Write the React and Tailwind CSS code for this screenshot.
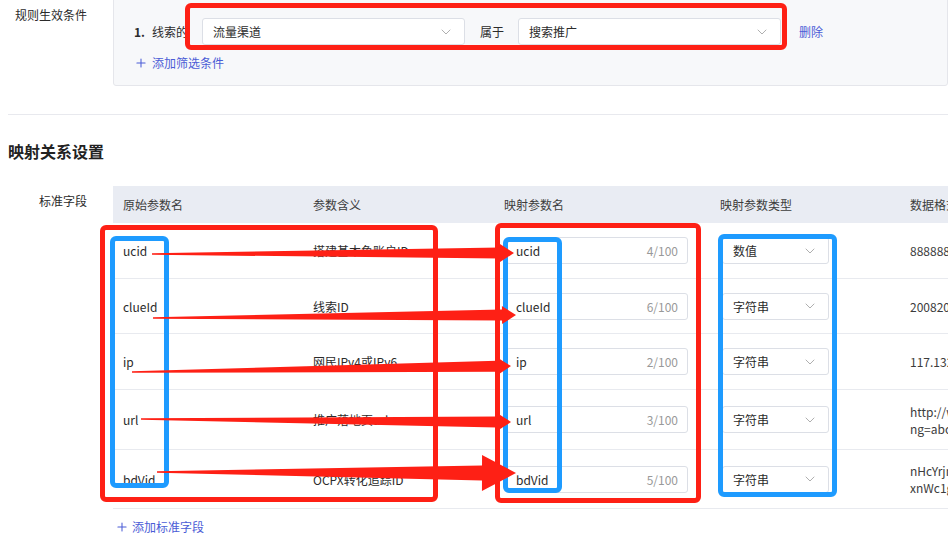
import React from "react";
import { ChevronDown, Plus } from "lucide-react";

const rows = [
  { name: "ucid", meaning: "搭建基木鱼账户ID", count: "4/100", type: "数值", data: ["8888888888"], h: "h-[56px]" },
  { name: "clueId", meaning: "线索ID", count: "6/100", type: "字符串", data: ["2008200000"], h: "h-[55px]" },
  { name: "ip", meaning: "网民IPv4或IPv6", count: "2/100", type: "字符串", data: ["117.132.1.1"], h: "h-[56px]" },
  { name: "url", meaning: "推广落地页url", count: "3/100", type: "字符串", data: ["http://www.baidu.com", "ng=abc123"], h: "h-[60px]" },
  { name: "bdVid", meaning: "OCPX转化追踪ID", count: "5/100", type: "字符串", data: ["nHcYrjnd8b", "xnWc1gRk"], h: "h-[59px]" },
];

const arrows = [
  { from: [152, 254], to: [514, 253], w0: 1.5, w1: 11, hw: 9, hl: 14 },
  { from: [153, 318], to: [516, 315], w0: 1.5, w1: 11, hw: 9, hl: 14 },
  { from: [132, 372], to: [511, 366], w0: 1.5, w1: 11, hw: 9, hl: 14 },
  { from: [141, 419], to: [511, 422], w0: 1.5, w1: 11, hw: 9, hl: 14 },
  { from: [157, 472], to: [516, 473], w0: 1.5, w1: 15, hw: 18, hl: 34 },
];

const arrowPoints = ({ from, to, w0, w1, hw, hl }) => {
  const [x0, y0] = from;
  const [x1, y1] = to;
  const len = Math.hypot(x1 - x0, y1 - y0);
  const dx = (x1 - x0) / len;
  const dy = (y1 - y0) / len;
  const nx = -dy;
  const ny = dx;
  const bx = x1 - dx * hl;
  const by = y1 - dy * hl;
  const p = [
    [x0 + (nx * w0) / 2, y0 + (ny * w0) / 2],
    [bx + (nx * w1) / 2, by + (ny * w1) / 2],
    [bx + nx * hw, by + ny * hw],
    [x1, y1],
    [bx - nx * hw, by - ny * hw],
    [bx - (nx * w1) / 2, by - (ny * w1) / 2],
    [x0 - (nx * w0) / 2, y0 - (ny * w0) / 2],
  ];
  return p.map((q) => q.join(",")).join(" ");
};

const Select = ({ value, className }) => (
  <div
    className={`flex items-center justify-between h-[27px] bg-white border border-[#dcdfe6] rounded-[3px] pl-[10px] pr-[10px] text-[#2b2b2b] ${className}`}
  >
    <span>{value}</span>
    <ChevronDown size={16} strokeWidth={1.2} className="text-[#9a9a9a]" />
  </div>
);

const App = () => {
  return (
    <div className="relative w-[948px] h-[545px] overflow-hidden bg-white text-[12px] leading-[17px] text-[#2b2b2b] font-['Noto_Sans_CJK_SC','Noto_Sans',sans-serif]">
      {/* 规则生效条件 */}
      <div className="flex">
        <div className="w-[113px] shrink-0 text-right pr-[26px] pt-[6px]">规则生效条件</div>
        <div className="flex-1 -mt-[4px] h-[90px] bg-[#f7f8fa] border border-[#e5e6eb] rounded-[3px] pl-[20px] pt-[21px]">
          <div className="flex items-center h-[27px]">
            <span className="w-[18px] font-bold">1.</span>
            <span className="w-[50px]">线索的</span>
            <Select value="流量渠道" className="w-[263px]" />
            <span className="ml-[15px] w-[38px]">属于</span>
            <Select value="搜索推广" className="w-[263px]" />
            <span className="ml-[18px] text-[#4b5cd6]">删除</span>
          </div>
          <div className="flex items-center mt-[9px] text-[#4b5cd6]">
            <Plus size={14} strokeWidth={1.8} className="mr-[4px]" />
            <span>添加筛选条件</span>
          </div>
        </div>
      </div>

      <div className="mt-[28px] ml-[8px] h-px bg-[#e8e9ee]" />

      <div className="mt-[25px] ml-[8px] text-[16px] leading-[22px] font-bold text-[#222]">映射关系设置</div>

      {/* 标准字段 */}
      <div className="flex mt-[24px]">
        <div className="w-[113px] shrink-0 text-right pr-[26px] pt-[6px]">标准字段</div>
        <div className="shrink-0 w-[1000px]">
          <div className="flex items-center h-[37px] bg-[#e9ecf3] text-[#3c3c3c]">
            <div className="w-[190px] pl-[10px]">原始参数名</div>
            <div className="w-[191px] pl-[10px]">参数含义</div>
            <div className="w-[216px] pl-[10px]">映射参数名</div>
            <div className="w-[190px] pl-[10px]">映射参数类型</div>
            <div className="flex-1 pl-[10px]">数据格式示例</div>
          </div>
          {rows.map((r) => (
            <div key={r.name} className={`flex items-center ${r.h} border-b border-[#e8eaef]`}>
              <div className="w-[190px] pl-[10px]">{r.name}</div>
              <div className="w-[191px] pl-[10px]">{r.meaning}</div>
              <div className="w-[216px] pl-[12px]">
                <div className="flex items-center justify-between w-[182px] h-[27px] border border-[#dcdfe6] rounded-[3px] pl-[9px] pr-[9px]">
                  <span>{r.name}</span>
                  <span className="text-[#999]">{r.count}</span>
                </div>
              </div>
              <div className="w-[190px] pl-[12px]">
                <Select value={r.type} className="w-[107px]" />
              </div>
              <div className="flex-1 pl-[10px] text-[#3c3c3c]">
                {r.data.map((d) => (
                  <div key={d}>{d}</div>
                ))}
              </div>
            </div>
          ))}
          <div className="flex items-center mt-[9px] ml-[2px] text-[#4b5cd6]">
            <Plus size={14} strokeWidth={1.8} className="mr-[3px]" />
            <span>添加标准字段</span>
          </div>
        </div>
      </div>

      {/* annotations */}
      <div className="pointer-events-none absolute left-[185px] top-[3px] w-[602px] h-[47px] border-[5px] border-[#fe2015] rounded-[6px]" />
      <div className="pointer-events-none absolute left-[100px] top-[225px] w-[338px] h-[277px] border-[5px] border-[#fe2015] rounded-[6px]" />
      <div className="pointer-events-none absolute left-[495px] top-[223px] w-[206px] h-[280px] border-[5px] border-[#fe2015] rounded-[6px]" />
      <div className="pointer-events-none absolute left-[110px] top-[236px] w-[59px] h-[252px] border-[5px] border-[#1e9bff] rounded-[6px]" />
      <div className="pointer-events-none absolute left-[503px] top-[237px] w-[59px] h-[256px] border-[5px] border-[#1e9bff] rounded-[6px]" />
      <div className="pointer-events-none absolute left-[718px] top-[234px] w-[119px] h-[263px] border-[5px] border-[#1e9bff] rounded-[6px]" />
      <svg className="pointer-events-none absolute left-0 top-0" width="948" height="545">
        {arrows.map((a, i) => (
          <polygon key={i} points={arrowPoints(a)} fill="#fe2015" />
        ))}
      </svg>
    </div>
  );
};

export default App;
